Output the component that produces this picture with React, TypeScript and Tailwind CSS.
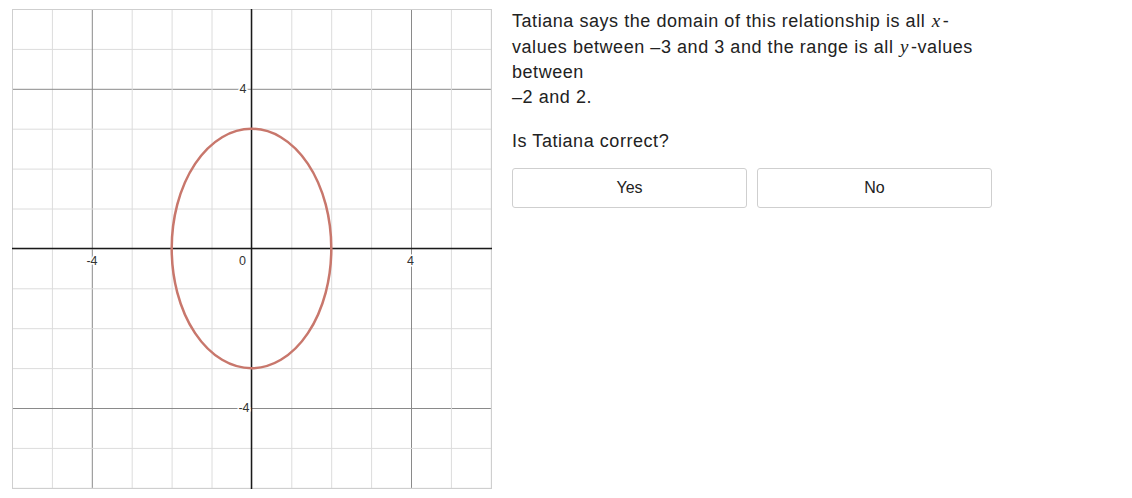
import React from "react";

const SIZE = 480;
const STEP = 39.9;
const OX = 239.5;
const OY = 239.5;

function Graph() {
  const lines = [];
  for (let i = 0; i <= 12; i++) {
    const p = i * STEP + 0.5;
    const major = i === 2 || i === 10;
    const stroke = major ? "#8a8a8a" : "#dcdcdc";
    lines.push(<line key={"v" + i} x1={p} y1={0} x2={p} y2={SIZE} stroke={stroke} strokeWidth={1} />);
    lines.push(<line key={"h" + i} x1={0} y1={p} x2={SIZE} y2={p} stroke={stroke} strokeWidth={1} />);
  }

  const label = (x: number, y: number, t: string, anchor: "middle" | "end") => (
    <text
      x={x}
      y={y}
      textAnchor={anchor}
      fontSize={12.5}
      fill="#333"
      stroke="#fff"
      strokeWidth={3}
      paintOrder="stroke"
      fontFamily="'Liberation Sans', Arial, sans-serif"
    >
      {t}
    </text>
  );

  return (
    <svg width={SIZE} height={SIZE} viewBox={`0 0 ${SIZE} ${SIZE}`} className="block">
      <rect x={0.5} y={0.5} width={SIZE - 1} height={SIZE - 1} fill="#fff" />
      {lines}
      <rect x={0.5} y={0.5} width={SIZE - 1} height={SIZE - 1} fill="none" stroke="#cfcfcf" />
      <line x1={OX} y1={0} x2={OX} y2={SIZE} stroke="#1a1a1a" strokeWidth={1.5} />
      <line x1={0} y1={OY} x2={SIZE} y2={OY} stroke="#1a1a1a" strokeWidth={1.5} />
      {label(OX - 5, 84, "4", "end")}
      {label(OX - 2, 403, "-4", "end")}
      {label(80, 256, "-4", "middle")}
      {label(OX - 9, 256, "0", "middle")}
      {label(398.5, 256, "4", "middle")}
      <ellipse cx={OX} cy={OY} rx={STEP * 2} ry={STEP * 3} fill="none" stroke="#c8776c" strokeWidth={2.5} />
    </svg>
  );
}

export default function App() {
  const mathVar = "font-['Liberation_Serif',serif] italic text-[19px] ml-[1px] mr-[2px]";
  return (
    <div className="w-[1132px] h-[498px] bg-white flex gap-5 pl-3 pt-[9px] font-['Liberation_Sans',Arial,sans-serif] text-[#222]">
      <Graph />
      <div className="w-[480px] -mt-[1px]">
        <p className="text-[18px] tracking-[0.55px] leading-[25px]">
          Tatiana says the domain of this relationship is all <span className={mathVar}>x</span>-
          <br />
          values between –3 and 3 and the range is all <span className={mathVar}>y</span>-values
          <br />
          between
          <br />
          –2 and 2.
        </p>
        <p className="text-[18px] tracking-[0.55px] leading-[24px] mt-[19px]">Is Tatiana correct?</p>
        <div className="flex gap-[10px] mt-[15px]">
          <button className="w-[235px] h-[40px] rounded-[3px] border border-[#cfcfcf] bg-white text-[16px] text-[#222]">
            Yes
          </button>
          <button className="w-[235px] h-[40px] rounded-[3px] border border-[#cfcfcf] bg-white text-[16px] text-[#222]">
            No
          </button>
        </div>
      </div>
    </div>
  );
}
